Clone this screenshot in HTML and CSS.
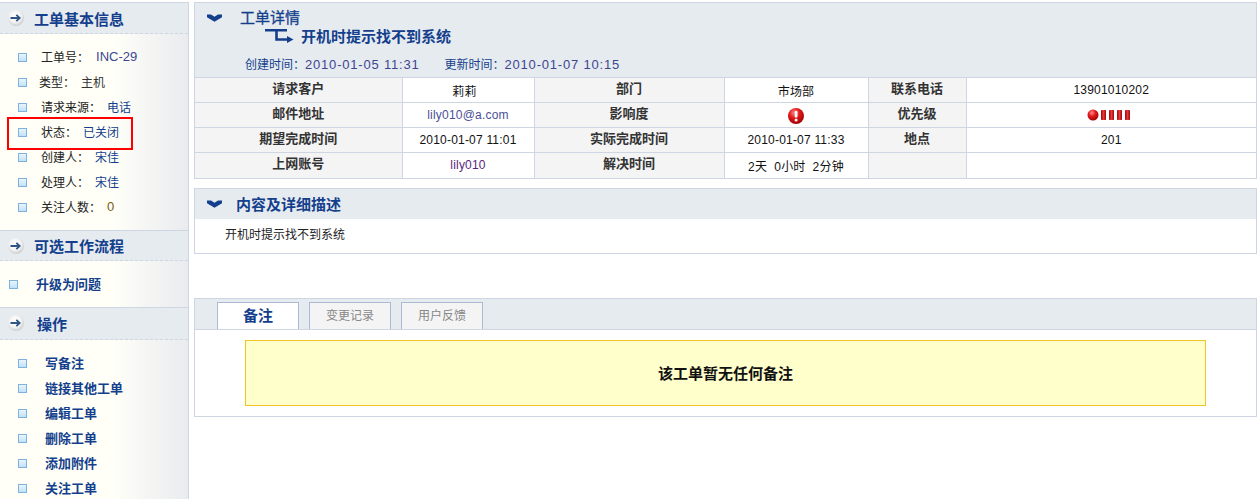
FILE: index.html
```html
<!DOCTYPE html>
<html lang="zh">
<head>
<meta charset="utf-8">
<title>工单详情</title>
<link rel="stylesheet" href="styles.css">
</head>
<body>
<svg class="defs" width="0" height="0" aria-hidden="true">
  <defs>
    <radialGradient id="disc" cx="45%" cy="40%" r="65%"><stop offset="0" stop-color="#ffffff"/><stop offset=".55" stop-color="#f4f4f4"/><stop offset="1" stop-color="#c4c4c4"/></radialGradient>
    <radialGradient id="red" cx="40%" cy="30%" r="75%"><stop offset="0" stop-color="#f88"/><stop offset=".45" stop-color="#e01818"/><stop offset="1" stop-color="#9c0000"/></radialGradient>
    <linearGradient id="bar" x1="0" y1="0" x2="1" y2="0"><stop offset="0" stop-color="#a00606"/><stop offset=".5" stop-color="#e63a3a"/><stop offset="1" stop-color="#a00606"/></linearGradient>
    <symbol id="round-arrow" viewBox="0 0 16 16"><circle cx="8" cy="8" r="8" fill="url(#disc)"/><path d="M2.5 8h8.5M8.3 4.8l3.4 3.2-3.4 3.2" fill="none" stroke="#2f5685" stroke-width="1.8"/></symbol>
    <symbol id="chevron" viewBox="0 0 15 8"><path d="M0 .5 L4 .5 L7.5 2.8 L11 .5 L15 .5 V3.2 L7.5 7.8 L0 3.2 Z" fill="#143f8c"/></symbol>
  </defs>
</svg>
<div class="page">
  <aside class="sidebar">
    <section class="side-sec">
      <h2 class="side-head"><svg class="head-ico"><use href="#round-arrow"/></svg>工单基本信息</h2>
      <ul class="side-list info">
        <li><i class="sq"></i><span class="lbl">工单号：</span><span class="val code">INC-29</span></li>
        <li class="tight"><i class="sq"></i><span class="lbl">类型：</span><span class="val plain">主机</span></li>
        <li><i class="sq"></i><span class="lbl">请求来源：</span><span class="val">电话</span></li>
        <li><i class="sq"></i><span class="lbl">状态：</span><span class="val">已关闭</span><span class="mark"></span></li>
        <li><i class="sq"></i><span class="lbl">创建人：</span><span class="val">宋佳</span></li>
        <li><i class="sq"></i><span class="lbl">处理人：</span><span class="val">宋佳</span></li>
        <li><i class="sq"></i><span class="lbl">关注人数：</span><span class="val num">0</span></li>
      </ul>
    </section>
    <section class="side-sec">
      <h2 class="side-head mid"><svg class="head-ico"><use href="#round-arrow"/></svg>可选工作流程</h2>
      <ul class="side-list flow">
        <li><i class="sq"></i><a>升级为问题</a></li>
      </ul>
    </section>
    <section class="side-sec">
      <h2 class="side-head ops"><svg class="head-ico"><use href="#round-arrow"/></svg>操作</h2>
      <ul class="side-list actions">
        <li><i class="sq"></i><a>写备注</a></li>
        <li><i class="sq"></i><a>链接其他工单</a></li>
        <li><i class="sq"></i><a>编辑工单</a></li>
        <li><i class="sq"></i><a>删除工单</a></li>
        <li><i class="sq"></i><a>添加附件</a></li>
        <li><i class="sq"></i><a>关注工单</a></li>
      </ul>
    </section>
  </aside>
  <main class="main">
    <section class="panel">
      <header class="detail-head">
        <div class="title-row"><svg class="chev"><use href="#chevron"/></svg><h1 class="t-main">工单详情</h1></div>
        <div class="sub-row">
          <svg class="branch" viewBox="0 0 29 14"><path d="M0 1.2h22M11.500 0v10.500h11" fill="none" stroke="#143f8c" stroke-width="2.600"/><path d="M22 7l6.500 3.500-6.500 3.500z" fill="#143f8c"/></svg>
          <h2 class="t-sub">开机时提示找不到系统</h2>
        </div>
        <div class="meta"><span>创建时间：<b>2010-01-05 11:31</b></span><span>更新时间：<b>2010-01-07 10:15</b></span></div>
      </header>
      <table class="grid">
        <colgroup><col class="c1"><col class="c2"><col class="c3"><col class="c4"><col class="c5"><col></colgroup>
        <tr><th>请求客户</th><td class="name">莉莉</td><th>部门</th><td>市场部</td><th>联系电话</th><td>13901010202</td></tr>
        <tr><th>邮件地址</th><td class="mail">lily010@a.com</td><th>影响度</th><td>
          <svg class="alert" viewBox="0 0 16 16"><circle cx="8" cy="8" r="8" fill="url(#red)"/><rect x="6.700" y="3" width="2.800" height="6.500" rx="1" fill="#fff"/><circle cx="8.100" cy="12" r="1.500" fill="#fff"/></svg>
        </td><th>优先级</th><td class="prio-cell">
          <svg class="prio" viewBox="0 0 43 12"><circle cx="6" cy="6" r="5.500" fill="url(#red)"/><rect x="14" y="1" width="5" height="10" rx=".7" fill="url(#bar)"/><rect x="22" y="1" width="5" height="10" rx=".7" fill="url(#bar)"/><rect x="30" y="1" width="5" height="10" rx=".7" fill="url(#bar)"/><rect x="38" y="1" width="5" height="10" rx=".7" fill="url(#bar)"/></svg>
        </td></tr>
        <tr><th>期望完成时间</th><td>2010-01-07 11:01</td><th>实际完成时间</th><td>2010-01-07 11:33</td><th>地点</th><td>201</td></tr>
        <tr><th>上网账号</th><td class="acct">lily010</td><th>解决时间</th><td>2天&nbsp;&nbsp;0小时&nbsp;&nbsp;2分钟</td><th></th><td></td></tr>
      </table>
    </section>
    <section class="panel desc">
      <header class="bar-head"><svg class="chev"><use href="#chevron"/></svg><h2 class="t-desc">内容及详细描述</h2></header>
      <p class="desc-text">开机时提示找不到系统</p>
    </section>
    <section class="panel notes">
      <nav class="tabs">
        <a class="tab on">备注</a>
        <a class="tab">变更记录</a>
        <a class="tab">用户反馈</a>
      </nav>
      <div class="notes-body"><div class="notice">该工单暂无任何备注</div></div>
    </section>
  </main>
</div>
</body>
</html>
```
FILE: styles.css
```css
* { box-sizing: border-box; }
html, body { margin: 0; padding: 0; height: 499px; overflow: hidden; background: #fff; }
body { font-family: "Liberation Sans", "Noto Sans CJK SC", sans-serif; font-size: 12px; color: #222; }
.defs { position: absolute; }
h1, h2, p, ul { margin: 0; padding: 0; }
ul { list-style: none; }

.page { display: flex; gap: 5px; padding-top: 2px; height: 499px; }

.sidebar { width: 189px; flex: none; border-right: 1px solid #cdd6e2; background: linear-gradient(90deg, #fffff8 0, #fffff8 60%, #e9ebef 100%); }
.side-head { display: flex; align-items: center; height: 32px; border-top: 1px solid #cdd6e2; border-bottom: 1px dashed #cdd6e2; background: #e6ebf0; padding-left: 8px; font-size: 15px; font-weight: 700; color: #143f8c; }
.side-head.mid { height: 31px; }
.side-head.ops { height: 33px; padding-bottom: 1px; }
.head-ico { width: 16px; height: 16px; margin-right: 10px; flex: none; }
.ops .head-ico { margin-right: 13px; }

.side-list li { position: relative; display: flex; align-items: center; height: 25px; }
.info { padding: 11px 0 10px 18px; }
.flow { padding: 11px 0 10px 9px; }
.actions { padding: 11px 0 0 18px; }
.sq { width: 9px; height: 9px; flex: none; margin-right: 14px; border: 1px solid #7fb2dd; background: linear-gradient(#e8f5fd, #bfe2f8); }
.tight .sq { margin-right: 12px; }
.lbl { margin: 0 6px 2px 0; }
.val { color: #143f8c; margin-bottom: 2px; }
.val.code { color: #3d4590; font-size: 13px; margin-left: 1px; }
.val.plain { color: #333; }
.val.num { color: #7a5a10; font-size: 13px; }
.mark { position: absolute; left: -11px; top: -3px; width: 126px; height: 33px; border: 2px solid #f00; pointer-events: none; }

.side-list a { font-size: 13px; font-weight: 700; color: #143f8c; margin-bottom: 2px; }
.flow .sq { margin-right: 18px; }
.actions .sq { margin-right: 18px; }

.main { width: 1063px; flex: none; }
.panel { border: 1px solid #cdd6e2; }
.detail-head { height: 74px; background: #e6ebf0; padding: 6px 0 0 12px; color: #143f8c; }
.title-row { display: flex; align-items: center; height: 18px; }
.chev { width: 15px; height: 8px; flex: none; }
.t-main { margin-left: 18px; font-size: 15px; font-weight: 400; line-height: 18px; color: #143f8c; -webkit-text-stroke: .3px #143f8c; }
.sub-row { display: flex; align-items: center; height: 20px; padding-left: 58px; }
.branch { width: 29px; height: 14px; flex: none; margin-right: 7px; margin-top: -2px; }
.t-sub { font-size: 15px; font-weight: 700; line-height: 20px; color: #143f8c; }
.meta { display: flex; gap: 25px; padding: 9px 0 0 38px; font-size: 12px; line-height: 18px; }
.meta b { font-weight: 400; font-size: 13px; letter-spacing: .8px; color: #3d4590; }

.grid { width: 1061px; border-collapse: collapse; table-layout: fixed; font-size: 12px; }
.c1 { width: 207px; }
.c2 { width: 132px; }
.c3 { width: 190px; }
.c4 { width: 144px; }
.c5 { width: 98px; }
.grid th, .grid td { height: 25px; padding: 0; text-align: center; border: 1px solid #cdd6e2; }
.grid tr:last-child th, .grid tr:last-child td { border-bottom: 0; }
.grid th:first-child { border-left: 0; }
.grid td:last-child { border-right: 0; }
.grid th { background: #f4f4f4; font-size: 13px; font-weight: 700; color: #333; padding-bottom: 5px; }
.grid td { color: #111; letter-spacing: .2px; }
.grid .name { padding-right: 7px; }
.grid .mail { color: #4a4f96; }
.grid .acct { color: #5a1f80; }
.alert { display: block; width: 16px; height: 16px; margin: 2px auto 0; }
.grid .prio-cell { padding-right: 6px; }
.prio { display: block; width: 43px; height: 12px; margin: 0 auto 1px; }

.desc { margin-top: 9px; height: 66px; }
.bar-head { display: flex; align-items: center; height: 30px; padding-left: 12px; background: #e6ebf0; }
.t-desc { margin-left: 14px; font-size: 15px; font-weight: 700; color: #143f8c; }
.desc-text { padding: 7px 0 0 30px; line-height: 18px; color: #222; }

.notes { margin-top: 44px; height: 119px; }
.tabs { display: flex; gap: 10px; align-items: flex-end; height: 31px; padding: 3px 0 0 22px; background: #e6ebf0; border-bottom: 1px solid #cdd6e2; }
.tab { width: 82px; height: 27px; display: flex; align-items: center; justify-content: center; border: 1px solid #a9bad2; border-bottom: 0; background: #f4f4f4; color: #888; padding-bottom: 3px; }
.tab.on { background: #fff; color: #143f8c; font-size: 15px; font-weight: 700; }
.notes-body { padding: 10px 50px 0; }
.notice { width: 961px; height: 66px; display: flex; align-items: center; justify-content: center; border: 1px solid #f0c428; background: #ffffcc; color: #111; font-size: 15px; font-weight: 700; padding-bottom: 1px; }
```
